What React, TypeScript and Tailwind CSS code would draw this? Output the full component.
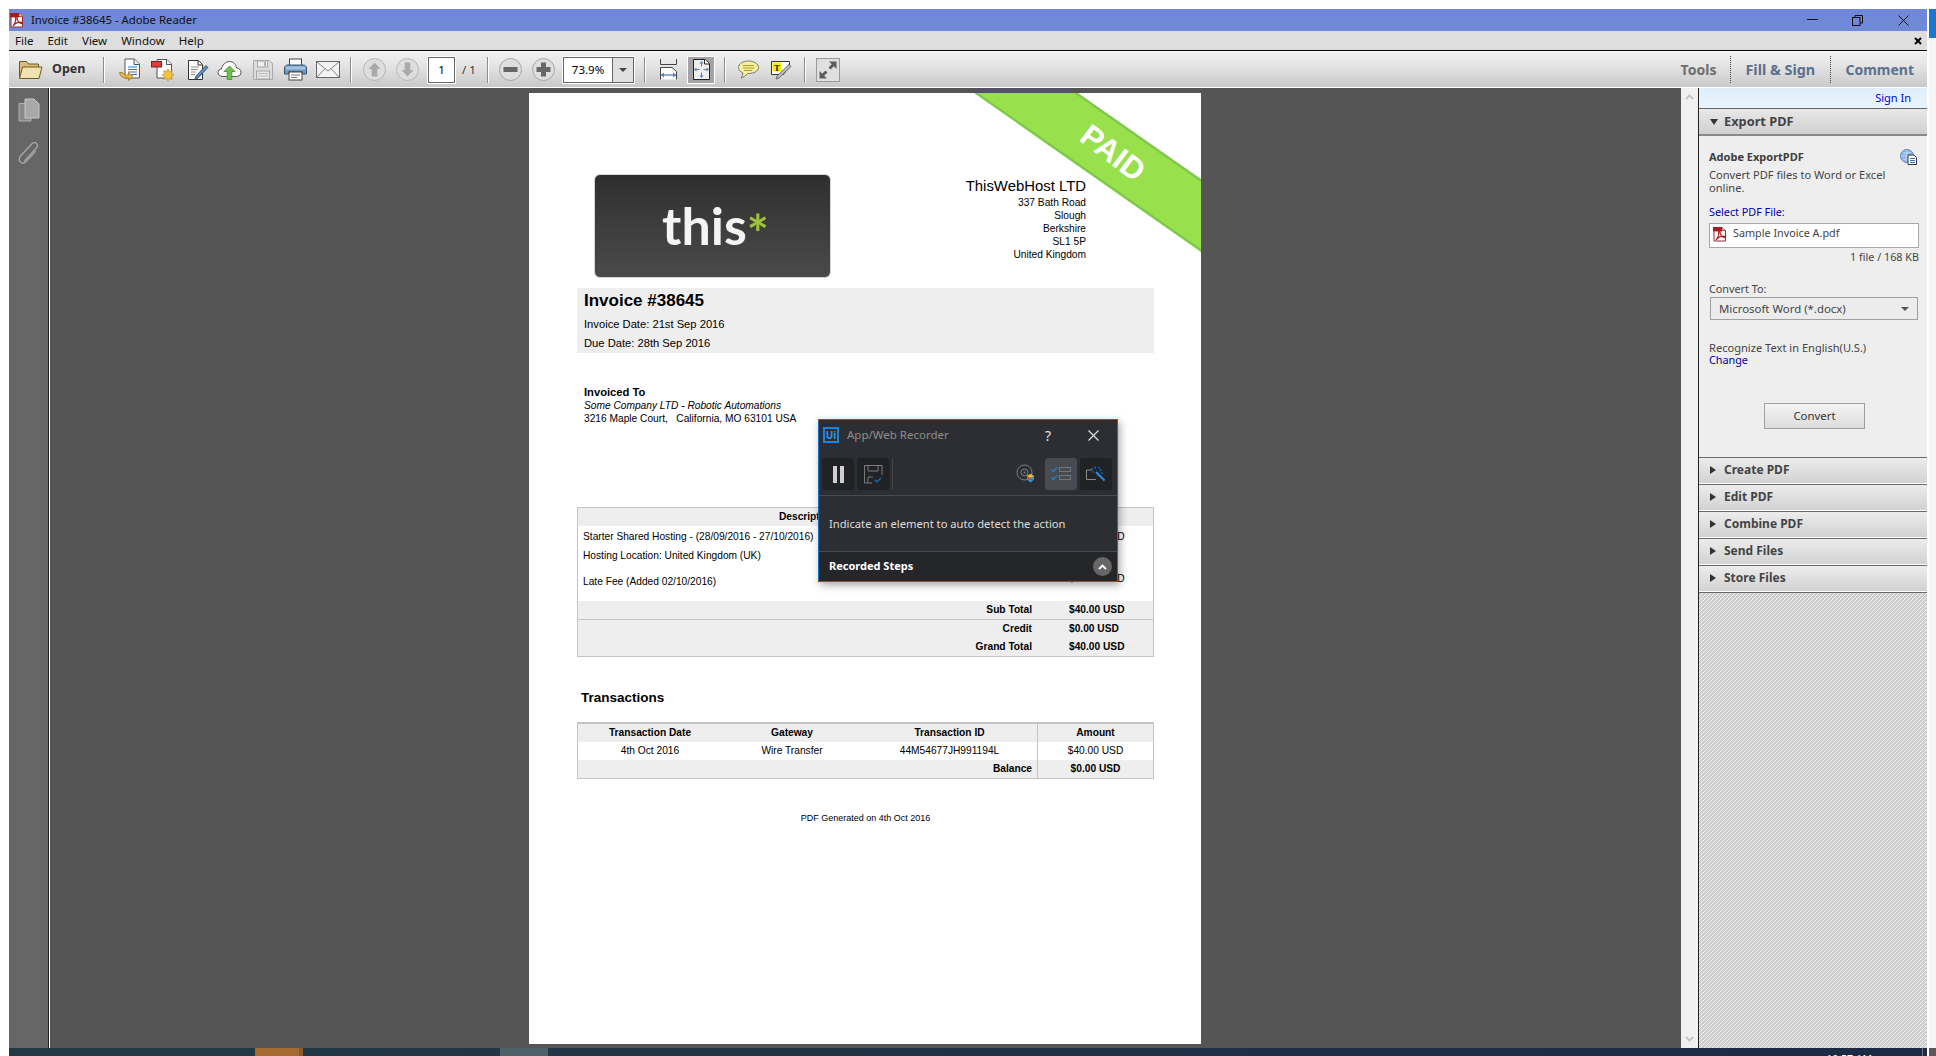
import React from "react";

const UI = "font-['Noto_Sans','Open_Sans',sans-serif]";

function PdfIcon({ size = 16 }: { size?: number }) {
  return (
    <svg width={size} height={size} viewBox="0 0 16 16" className="shrink-0">
      <path d="M1 1.500h8l3.500 3V15H1z" fill="#fff" stroke="#9a2a2a" strokeWidth="1" />
      <path d="M9 1.500v3h3.500" fill="#f3dede" stroke="#9a2a2a" strokeWidth="0.8" />
      <rect x="0" y="1" width="9" height="4.400" fill="#a81c1c" />
      <path d="M3 14c1.500-2 3-6 2.600-8.600C5.300 4 7 4 7 6c0 2.500 2 5 4 5.500 1.600.4 2-.9.300-1.200C9 10 5.500 11 3 14z" fill="none" stroke="#b11e1e" strokeWidth="1.200" />
    </svg>
  );
}

function Sep({ ml, mr }: { ml: string; mr: string }) {
  return <div className={`w-[2px] h-[26px] bg-[#8c8c8c] border-r border-white shrink-0 ${ml} ${mr}`} />;
}

function Folder() {
  return (
    <svg width="25" height="21" viewBox="0 0 25 21">
      <path d="M1.500 19V2.500h7l2 2.500h10v3" fill="#d9bf7c" stroke="#6d5a2c" />
      <path d="M1.500 19.500 4.500 8h19.500l-3 11.500z" fill="#f1e3b0" stroke="#6d5a2c" />
    </svg>
  );
}
function ConvertDoc() {
  return (
    <svg width="23" height="23" viewBox="0 0 23 23">
      <path d="M7 1h9.500L21.500 6v14H7z" fill="#fff" stroke="#555" />
      <path d="M16 1v5.500h5.500" fill="#eee" stroke="#555" />
      <path d="M10 9h9M10 11.500h9M10 14h9M13 16.500h6" stroke="#3a6fc4" strokeWidth="1.200" />
      <path d="M1.500 14.500c.5 4 4 6 9 5.500v2.500l4.500-4-4.500-4v2.500c-3 .5-5-.5-6-2.500z" fill="#e9b64a" stroke="#9b7420" strokeWidth="0.800" />
    </svg>
  );
}
function CreateDoc() {
  return (
    <svg width="24" height="24" viewBox="0 0 24 24">
      <path d="M6 1.500h10l4.500 4.500v14H6z" fill="#fff" stroke="#555" />
      <path d="M15.500 1.500V6.500h5" fill="#eee" stroke="#555" />
      <rect x="0.500" y="3.500" width="10" height="5.500" fill="#e23b3b" stroke="#7d2020" />
      <path d="M17 11l1.500 2.500 2.800-.8-.8 2.800L23 17l-2.500 1.500.8 2.800-2.800-.8L17 23l-1.500-2.500-2.800.8.8-2.800L11 17l2.500-1.500-.8-2.800 2.800.8z" fill="#f4c43c" stroke="#ab8420" strokeWidth="0.600" />
    </svg>
  );
}
function EditDoc() {
  return (
    <svg width="22" height="22" viewBox="0 0 22 22">
      <path d="M1.500 1.500h10l4 4v15h-14z" fill="#fff" stroke="#333" />
      <path d="M11 1.500v4.500h4.500" fill="#eee" stroke="#333" />
      <path d="M4 8h8M4 10.500h7M4 13h5M4 15.500h4" stroke="#888" />
      <path d="M9 17l-1 3 3-1L21 8.500 18.800 6.500z" fill="#5d8fb8" stroke="#27496a" strokeWidth="0.800" />
    </svg>
  );
}
function Cloud() {
  return (
    <svg width="25" height="20" viewBox="0 0 25 20">
      <path d="M6 16.500C2.500 16.500 1 14.500 1 12.500 1 10.500 2.500 9 4.500 9 5.200 5 8.500 1.500 12.500 1.500c4 0 6.500 2.800 7 6.500 2.500 0 4.500 2 4.500 4.300 0 2.500-2 4.200-4.500 4.200z" fill="#fbfbfb" stroke="#555" />
      <path d="M12.500 6l5.500 5.500h-3.200V19.500h-4.600V11.500H7z" fill="#6cc24a" stroke="#3d7d28" strokeWidth="0.700" />
    </svg>
  );
}
function SaveI() {
  return (
    <svg width="20" height="20" viewBox="0 0 20 20">
      <path d="M.5.500h16l3 3v16H.5z" fill="#dcdcdc" stroke="#a8a8a8" />
      <rect x="4.500" y="1" width="10" height="6" fill="#eee" stroke="#a8a8a8" />
      <rect x="11" y="2" width="2" height="4" fill="#b0b0b0" />
      <rect x="3.500" y="11" width="13" height="8" fill="#e8e8e8" stroke="#a8a8a8" />
      <path d="M5 13.500h10M5 16h10" stroke="#bbb" />
    </svg>
  );
}
function PrintI() {
  return (
    <svg width="23" height="23" viewBox="0 0 23 23">
      <rect x="5.500" y="1" width="12" height="8" fill="#fff" stroke="#444" />
      <path d="M3.500 7h16c1.500 0 3 1.500 3 3v6h-4v-2h-14v2h-4v-6c0-1.500 1.500-3 3-3z" fill="#6f9bc2" stroke="#33536f" />
      <rect x="1.500" y="8.500" width="20" height="3" fill="#a5c3dc" />
      <rect x="5" y="14" width="13" height="8" fill="#fff" stroke="#444" />
      <path d="M7 17h9M7 19.500h6" stroke="#777" />
    </svg>
  );
}
function MailI() {
  return (
    <svg width="24" height="17" viewBox="0 0 24 17">
      <rect x="0.500" y="0.500" width="23" height="16" fill="#f3f3f3" stroke="#666" />
      <path d="M1 1l11 9 11-9M1 16l8-8.500M23 16l-8-8.500" fill="none" stroke="#888" />
    </svg>
  );
}
function CircleArrow({ down }: { down?: boolean }) {
  return (
    <svg width="23" height="23" viewBox="0 0 23 23" className={down ? "rotate-180" : ""}>
      <circle cx="11.500" cy="11.500" r="11" fill="#dedede" stroke="#b5b5b5" />
      <path d="M11.500 4.500l6 6.500h-3.200v7.500h-5.600V11H5.500z" fill="#a9a9a9" />
    </svg>
  );
}
function CircleOp({ plus }: { plus?: boolean }) {
  return (
    <svg width="23" height="23" viewBox="0 0 23 23">
      <circle cx="11.500" cy="11.500" r="11" fill="#dedede" stroke="#a5a5a5" />
      <rect x="4.500" y="9" width="14" height="5" fill="#666" />
      {plus && <rect x="9" y="4.500" width="5" height="14" fill="#666" />}
    </svg>
  );
}
function FitWidth() {
  return (
    <svg width="17" height="21" viewBox="0 0 17 21">
      <path d="M.5 0v5.500h16V0" fill="none" stroke="#444" />
      <path d="M.5 20.500V8.500h11.500l4.500 4v8" fill="#fff" stroke="#444" />
      <path d="M1 16h15" stroke="#5b7fb8" strokeWidth="1.300" />
      <path d="M1 16l3-2.500v5zM16 16l-3-2.500v5z" fill="#5b7fb8" />
    </svg>
  );
}
function FitPage() {
  return (
    <svg width="17" height="21" viewBox="0 0 17 21">
      <path d="M.5.500h11.500l4.500 4v16H.5z" fill="#eee" stroke="#222" />
      <path d="M11.500.500v4.500h5" fill="#fff" stroke="#222" />
      <path d="M8.500 3v4.500M8.500 13.500V18M2 10.500h4.500M10.500 10.500H15" stroke="#5b7fb8" />
      <path d="M8.500 2l-2 2.500h4zM8.500 19l-2-2.500h4zM1 10.500l2.500-2v4zM16 10.500l-2.500-2v4z" fill="#5b7fb8" />
    </svg>
  );
}
function CommentI() {
  return (
    <svg width="21" height="19" viewBox="0 0 21 19">
      <path d="M10.500 1C5 1 .5 3.800.5 7.500c0 2.500 2 4.500 4.500 5.500-.2 2-1 3.500-2 5 2.500-.7 5-2.500 6.500-4.500h1c5.500 0 10-2.500 10-6S16 1 10.500 1z" fill="#f7f09a" stroke="#777" />
      <path d="M5 5.500h11M5 8h11M6 10.500h8" stroke="#a59a30" />
    </svg>
  );
}
function HighlightI() {
  return (
    <svg width="21" height="20" viewBox="0 0 21 20">
      <path d="M.5 1.500h18v4l-6 9H.5z" fill="#fff" stroke="#333" />
      <rect x="1.500" y="2.500" width="9" height="9" fill="#f4f000" />
      <text x="6" y="10.500" textAnchor="middle" fontSize="9" fontWeight="700" fontFamily="Liberation Serif" fill="#222">T</text>
      <path d="M6 16l-1 3 3-1L20 6.500 18 4.500z" fill="#bbb" stroke="#555" strokeWidth="0.800" />
    </svg>
  );
}
function ExpandI() {
  return (
    <svg width="24" height="24" viewBox="0 0 24 24">
      <rect x="0.500" y="0.500" width="23" height="23" fill="#e0e0e0" stroke="#9a9a9a" />
      <path d="M13 3.500h7.500V11l-2.700-2.700-3.300 3.200-2-2 3.300-3.200zM11 20.500H3.500V13l2.700 2.700 3.300-3.200 2 2-3.300 3.200z" fill="#5c5c5c" />
    </svg>
  );
}

function Toolbar() {
  return (
    <div className={`h-[35px] flex items-center bg-[linear-gradient(180deg,#f0f0f0_0%,#e6e6e6_35%,#c9c9c9_100%)] ${UI} shrink-0`}>
      <div className="ml-[9px] flex"><Folder /></div>
      <span className="ml-[9px] w-[33px] text-[12.500px] font-bold text-[#333]">Open</span>
      <Sep ml="ml-[18px]" mr="mr-[13px]" />
      <ConvertDoc />
      <div className="ml-[10px] flex"><CreateDoc /></div>
      <div className="ml-[12px] flex"><EditDoc /></div>
      <div className="ml-[8px] flex"><Cloud /></div>
      <div className="ml-[11px] flex"><SaveI /></div>
      <div className="ml-[11px] flex"><PrintI /></div>
      <div className="ml-[9px] flex"><MailI /></div>
      <Sep ml="ml-[10px]" mr="mr-[11px]" />
      <CircleArrow />
      <div className="ml-[10px] flex"><CircleArrow down /></div>
      <div className="ml-[9px] w-[27px] h-[26px] bg-white border border-[#666] outline outline-white flex items-center justify-center text-[11.500px] text-black">1</div>
      <span className="ml-[7px] w-[16px] text-[11.500px] text-[#333] whitespace-nowrap">/ 1</span>
      <Sep ml="ml-[9px]" mr="mr-[10px]" />
      <CircleOp />
      <div className="ml-[10px] flex"><CircleOp plus /></div>
      <div className="ml-[8px] w-[71px] h-[26px] border border-[#666] outline outline-white flex text-[11.500px] text-black">
        <div className="w-[48px] bg-white flex items-center justify-center">73.9%</div>
        <div className="flex-1 border-l border-[#666] bg-[#e0e0e0] flex items-center justify-center">
          <div className="w-0 h-0 border-x-[4px] border-x-transparent border-t-[4px] border-t-[#444]" />
        </div>
      </div>
      <Sep ml="ml-[10px]" mr="mr-[14px]" />
      <FitWidth />
      <div className="ml-[11px] w-[26px] h-[26px] bg-[#a3a3a3] outline outline-white flex items-center justify-center"><FitPage /></div>
      <Sep ml="ml-[10px]" mr="mr-[12px]" />
      <CommentI />
      <div className="ml-[12px] flex"><HighlightI /></div>
      <Sep ml="ml-[12px]" mr="mr-[10px]" />
      <ExpandI />
      <div className="ml-auto flex items-center text-[14px] font-bold h-full">
        <span className="text-[#6e6e6e] whitespace-nowrap">Tools</span>
        <div className="mx-[14px] h-[27px] border-l border-dotted border-[#444]" />
        <span className="w-[71px] text-[14.400px] text-[#5c6f8d] whitespace-nowrap">Fill &amp; Sign</span>
        <div className="mx-[14px] h-[27px] border-l border-dotted border-[#444]" />
        <span className="mr-[13px] text-[#5c6f8d] whitespace-nowrap">Comment</span>
      </div>
    </div>
  );
}

function SumRow({ label, value, h }: { label: string; value: string; h: string }) {
  return (
    <div className={`flex items-center font-bold ${h}`}>
      <div className="w-[454px] text-right">{label}</div>
      <div className="ml-[37px]">{value}</div>
    </div>
  );
}

function Page() {
  return (
    <div className="relative w-[672px] h-[951px] bg-white shrink-0 overflow-hidden font-['Liberation_Sans',Arial,sans-serif] text-black pl-[48px] pr-[47px]">
      <div className="absolute left-[445px] top-0 w-[227px] h-[159px] bg-[#7ec84c] [clip-path:polygon(0_0,104px_0,227px_86px,227px_159px)]" />
      <div className="absolute left-[445px] top-0 w-[227px] h-[159px] bg-[#98e04c] [clip-path:polygon(4px_0,100px_0,227px_89px,227px_156px)]" />
      <div className="absolute left-[584px] top-[60px] -translate-x-1/2 -translate-y-1/2 rotate-[37deg] text-white text-[31px] font-bold leading-none">PAID</div>

      <div className="relative flex justify-between pt-[81px] h-[195px]">
        <div className="ml-[17px] w-[237px] h-[104px] rounded-[6px] border border-[#d4d4d4] bg-[linear-gradient(180deg,#2e2e2e_0%,#3c3c3c_45%,#4a4a4a_100%)] flex items-center justify-center">
          <span className="font-['Lato',sans-serif] font-bold text-[52px] leading-none text-[#f4f4f4] -mt-[2px] ml-[6px]">this<span className="inline-block translate-y-[8px] text-[#9fc43a]">*</span></span>
        </div>
        <div className="mr-[68px] mt-[3px] text-right text-[10.200px] leading-[13px]">
          <div className="text-[14.900px] leading-[18px] mb-[1px]">ThisWebHost LTD</div>
          <div>337 Bath Road</div>
          <div>Slough</div>
          <div>Berkshire</div>
          <div>SL1 5P</div>
          <div>United Kingdom</div>
        </div>
      </div>

      <div className="h-[65px] bg-[#eeeeee] pl-[7px] pt-[2px] text-[11.200px]">
        <div className="text-[17px] font-bold leading-[22px] mb-[3px]">Invoice #38645</div>
        <div className="leading-[19px]">Invoice Date: 21st Sep 2016</div>
        <div className="leading-[19px]">Due Date: 28th Sep 2016</div>
      </div>

      <div className="pl-[7px] pt-[32px] h-[154px] text-[11.200px]">
        <div className="font-bold leading-[14px]">Invoiced To</div>
        <div className="italic text-[10.200px] leading-[14px]">Some Company LTD - Robotic Automations</div>
        <div className="text-[10.200px] leading-[12px]">3216 Maple Court, &nbsp; California, MO 63101 USA</div>
      </div>

      <div className="border border-[#c4c4c4] h-[150px] text-[10.200px]">
        <div className="h-[18px] bg-[#eeeeee] flex items-center font-bold">
          <div className="w-[458px] text-center">Description</div>
          <div className="flex-1 text-center">Amount</div>
        </div>
        <div className="h-[75px] pl-[5px]">
          <div className="h-[21px] flex items-center">
            <div className="w-[486px]">Starter Shared Hosting - (28/09/2016 - 27/10/2016)</div>
            <div>$30.00 USD</div>
          </div>
          <div className="h-[17px] flex items-center">Hosting Location: United Kingdom (UK)</div>
          <div className="h-[18px] mt-[9px] flex items-center">
            <div className="w-[486px]">Late Fee (Added 02/10/2016)</div>
            <div className="-mt-[6px]">$10.00 USD</div>
          </div>
        </div>
        <div className="bg-[#eeeeee]">
          <SumRow label="Sub Total" value="$40.00 USD" h="h-[19px] border-b border-[#c4c4c4]" />
          <SumRow label="Credit" value="$0.00 USD" h="h-[18px]" />
          <SumRow label="Grand Total" value="$40.00 USD" h="h-[18px]" />
        </div>
      </div>

      <div className="pl-[4px] pt-[32px] h-[65px] text-[13.500px] font-bold leading-[18px]">Transactions</div>

      <div className="border border-t-2 border-[#c4c4c4] h-[57px] text-[10.200px]">
        <div className="flex h-[18px] bg-[#eeeeee] font-bold items-stretch">
          <div className="w-[144px] flex items-center justify-center">Transaction Date</div>
          <div className="w-[140px] flex items-center justify-center">Gateway</div>
          <div className="w-[175px] flex items-center justify-center">Transaction ID</div>
          <div className="flex-1 border-l border-[#c4c4c4] flex items-center justify-center">Amount</div>
        </div>
        <div className="flex h-[18px] items-stretch">
          <div className="w-[144px] flex items-center justify-center">4th Oct 2016</div>
          <div className="w-[140px] flex items-center justify-center">Wire Transfer</div>
          <div className="w-[175px] flex items-center justify-center">44M54677JH991194L</div>
          <div className="flex-1 border-l border-[#c4c4c4] flex items-center justify-center">$40.00 USD</div>
        </div>
        <div className="flex h-[18px] bg-[#eeeeee] font-bold items-stretch">
          <div className="w-[454px] flex items-center justify-end">Balance</div>
          <div className="w-[5px]" />
          <div className="flex-1 border-l border-[#c4c4c4] flex items-center justify-center">$0.00 USD</div>
        </div>
      </div>

      <div className="mt-[31px] text-center text-[9px] leading-[16px]">PDF Generated on 4th Oct 2016</div>
    </div>
  );
}

function Recorder() {
  return (
    <div className={`absolute left-[768px] top-[331px] w-[300px] h-[163px] bg-[#2d2e33] border border-[#1b6fc2] shadow-[2px_3px_8px_rgba(0,0,0,0.35)] flex flex-col ${UI}`}>
      <div className="h-[32px] flex items-center shrink-0 pb-[2px]">
        <div className="ml-[4px] w-[16px] h-[16px] border-2 border-[#1a84d8] text-[#2a9be8] text-[10px] leading-[12px] text-center font-bold">Ui</div>
        <span className="ml-[8px] text-[11.500px] text-[#8e8e8e]">App/Web Recorder</span>
        <span className="ml-auto text-[14px] text-[#e8e8e8]">?</span>
        <svg width="11" height="11" viewBox="0 0 11 11" className="ml-[37px] mr-[18px]"><path d="M.5.500l10 10M10.500.500l-10 10" stroke="#e8e8e8" strokeWidth="1.100" /></svg>
      </div>
      <div className="h-[44px] flex items-start pt-[6px] pl-[3px] border-b border-[#4a4b50] shrink-0">
        <div className="w-[32px] h-[32px] rounded-[3px] bg-[#212226] flex items-center justify-center gap-[3px]">
          <div className="w-[4px] h-[17px] bg-[#d0d0d0]" /><div className="w-[4px] h-[17px] bg-[#d0d0d0]" />
        </div>
        <div className="ml-[3px] w-[32px] h-[32px] rounded-[3px] bg-[#212226] flex items-center justify-center">
          <svg width="19" height="19" viewBox="0 0 19 19"><path d="M18 10V.5H.5V18H8" fill="none" stroke="#7a7a7a" /><path d="M4 1v5h10V1M4 18v-6h5" fill="none" stroke="#7a7a7a" /><path d="M11 15l2 2 4-4" fill="none" stroke="#1a6fc2" strokeWidth="1.200" /></svg>
        </div>
        <div className="ml-[3px] w-px h-[32px] bg-[#46474c]" />
        <svg width="20" height="20" viewBox="0 0 20 20" className="ml-auto mr-[9px] mt-[6px]">
          <circle cx="8.500" cy="8.500" r="7.500" fill="none" stroke="#808080" />
          <circle cx="8.500" cy="8.500" r="3.500" fill="none" stroke="#808080" />
          <circle cx="8.500" cy="8.500" r="1" fill="#808080" />
          <path d="M14.500 10l3.500 2v3.500h-3.500z" fill="#2f9ae0" /><path d="M11 12l3.500-2v5.500H11z" fill="#e8502c" /><path d="M11 15.500h7l-3.500 3z" fill="#2f9ae0" /><path d="M11 12l3.500-2 3.500 2-3.500 1.500z" fill="#f2c230" />
        </svg>
        <div className="w-[32px] h-[32px] rounded-[3px] bg-[#4a4b52] flex items-center justify-center">
          <svg width="20" height="16" viewBox="0 0 20 16"><path d="M.5 3.500L2.500 5.500 6 1.500M.5 11.500l2 2L6 9.500" fill="none" stroke="#1a7fd8" strokeWidth="1.300" /><rect x="8.500" y="1.500" width="11" height="4" fill="none" stroke="#75767c" /><rect x="8.500" y="9.500" width="11" height="4" fill="none" stroke="#75767c" /></svg>
        </div>
        <div className="ml-[3px] mr-[5px] w-[32px] h-[32px] rounded-[3px] bg-[#212226] flex items-center justify-center">
          <svg width="20" height="16" viewBox="0 0 20 16"><path d="M6 4H.5v9.500h9.500" fill="none" stroke="#8a8a8a" /><path d="M10 6l8.500 8.500" stroke="#2c8fe0" strokeWidth="1.800" /><path d="M9 .5v2.500M13 .5V3M15.500 3.500l-1.500 1.500M17 7h-2.500M5.500 2l1.500 1.500M8 6H6M12 8.500v2" stroke="#1a6fc2" strokeWidth="1.200" /></svg>
        </div>
      </div>
      <div className="flex-1 flex items-center pl-[10px] text-[11.200px] text-[#dfdfdf] border-b border-[#4a4b50] pt-[1px]">Indicate an element to auto detect the action</div>
      <div className="h-[29px] shrink-0 bg-[#25262a] flex items-center pl-[10px] text-[11px] font-bold text-white">
        Recorded Steps
        <div className="ml-auto mr-[5px] w-[19px] h-[19px] rounded-full bg-[#666666] flex items-center justify-center">
          <svg width="9" height="6" viewBox="0 0 9 6"><path d="M1 5l3.500-3.500L8 5" fill="none" stroke="#fff" strokeWidth="1.800" /></svg>
        </div>
      </div>
    </div>
  );
}

function Section({ title }: { title: string }) {
  return (
    <div className="h-[27px] shrink-0 border-t border-[#6a6a6a] border-b border-b-white bg-[linear-gradient(180deg,#ececec,#d2d2d2)] flex items-center pb-[2px]">
      <div className="ml-[11px] w-0 h-0 border-y-[4px] border-y-transparent border-l-[6px] border-l-[#333]" />
      <span className="ml-[8px] text-[12px] font-bold text-[#444]">{title}</span>
    </div>
  );
}

function RightPanel() {
  return (
    <div className={`w-[228px] shrink-0 flex flex-col bg-[#eeeeee] ${UI}`}>
      <div className="h-[20px] shrink-0 bg-[linear-gradient(180deg,#deeffb,#eaf4fc)] text-right pr-[16px] text-[11px] leading-[20px] text-[#0000dd]">Sign In</div>
      <div className="h-[28px] shrink-0 border-t border-[#666] border-b-2 border-b-[#8a8a8a] bg-[linear-gradient(180deg,#e8e8e8,#d0d0d0)] flex items-center">
        <div className="ml-[11px] w-0 h-0 border-x-[4px] border-x-transparent border-t-[6px] border-t-[#333]" />
        <span className="ml-[6px] text-[12.800px] font-bold text-[#444]">Export PDF</span>
      </div>
      <div className="h-[321px] shrink-0 pl-[10px] pr-[8px] text-[10.800px] text-[#444]">
        <div className="flex items-center justify-between h-[18px] mt-[12px]">
          <span className="font-bold text-[#3d3d3d] text-[11px]">Adobe ExportPDF</span>
          <svg width="17" height="16" viewBox="0 0 17 16" className="mr-[2px]">
            <circle cx="7" cy="7" r="6.500" fill="#8db6e8" stroke="#5d86c0" />
            <path d="M1 7h12M7 1v12M3 3c2.500 1.500 5.500 1.500 8 0M3 11c2.500-1.500 5.500-1.500 8 0" fill="none" stroke="#d8e7f8" strokeWidth="0.700" />
            <path d="M8 6h6l2.500 2.500V15.500H8z" fill="#fff" stroke="#333" />
            <path d="M10 9.500h5M10 11.500h5M10 13.500h5" stroke="#3a6fc4" />
          </svg>
        </div>
        <div className="leading-[13px] mt-[2px] text-[11.100px] whitespace-nowrap">Convert PDF files to Word or Excel<br />online.</div>
        <div className="mt-[11px] leading-[14px] text-[#0000aa]">Select PDF File:</div>
        <div className="mt-[4px] h-[25px] w-[210px] bg-white border border-[#a8a8a8] flex items-start pl-[3px] pt-[2px]">
          <PdfIcon size={16} />
          <span className="ml-[4px] leading-[14px]">Sample Invoice A.pdf</span>
        </div>
        <div className="w-[210px] text-right leading-[14px] mt-[2px]">1 file / 168 KB</div>
        <div className="leading-[14px] mt-[18px]">Convert To:</div>
        <div className="mt-[1px] ml-[1px] h-[23px] w-[208px] border border-[#a0a0a0] bg-[#ececec] flex items-center pl-[8px] pr-[8px]">
          <span className="text-[11.400px]">Microsoft Word (*.docx)</span>
          <div className="ml-auto w-0 h-0 border-x-[4px] border-x-transparent border-t-[4px] border-t-[#555]" />
        </div>
        <div className="mt-[22px] leading-[12px] text-[11.100px] whitespace-nowrap">Recognize Text in English(U.S.)</div>
        <div className="leading-[12px] text-[#0000aa]">Change</div>
        <div className="mt-[37px] ml-[55px] w-[101px] h-[26px] border border-[#a0a0a0] bg-[linear-gradient(180deg,#f4f4f4,#dcdcdc)] flex items-center justify-center text-[11.400px] text-[#333]">Convert</div>
      </div>
      <Section title="Create PDF" />
      <Section title="Edit PDF" />
      <Section title="Combine PDF" />
      <Section title="Send Files" />
      <Section title="Store Files" />
      <div className="flex-1 border-t border-[#6a6a6a] bg-[linear-gradient(135deg,#cdcdcd_37.5%,#f2f2f2_37.5%,#f2f2f2_50%,#cdcdcd_50%,#cdcdcd_87.5%,#f2f2f2_87.5%)] bg-[length:4px_4px]" />
    </div>
  );
}

export default function App() {
  return (
    <div className="w-[1936px] h-[1056px] overflow-hidden bg-white flex pt-[9px]">
      <div className="w-[9px] shrink-0" />
      <div className="w-[1918px] shrink-0 flex flex-col">
        <div className={`h-[22px] shrink-0 bg-[#7088d8] flex items-center ${UI}`}>
          <div className="ml-[1px] flex"><PdfIcon size={16} /></div>
          <span className="ml-[5px] text-[11.350px] text-[#111]">Invoice #38645 - Adobe Reader</span>
          <svg width="11" height="2" viewBox="0 0 11 2" className="ml-auto"><rect width="11" height="1" fill="#111" /></svg>
          <svg width="11" height="11" viewBox="0 0 11 11" className="ml-[34px]"><path d="M3 3V.5h7.500V8H8" fill="none" stroke="#111" /><rect x="0.500" y="2.500" width="7.500" height="8" fill="none" stroke="#111" /></svg>
          <svg width="11" height="11" viewBox="0 0 11 11" className="ml-[35px] mr-[18px]"><path d="M.5.500l10 10M10.500.500l-10 10" stroke="#111" /></svg>
        </div>
        <div className={`h-[19px] shrink-0 bg-[#dedede] flex items-center text-[11.500px] text-[#111] pl-[6px] ${UI}`}>
          <span>File</span>
          <span className="ml-[14px]">Edit</span>
          <span className="ml-[14px]">View</span>
          <span className="ml-[14px]">Window</span>
          <span className="ml-[14px]">Help</span>
          <svg width="8" height="8" viewBox="0 0 8 8" className="ml-auto mr-[5px]"><path d="M1 1l6 6M7 1L1 7" stroke="#000" strokeWidth="2" /></svg>
        </div>
        <div className="h-[2px] shrink-0 bg-white border-t border-black" />
        <Toolbar />
        <div className="h-px shrink-0 bg-white" />
        <div className="flex-1 min-h-0 flex">
          <div className="w-[40px] shrink-0 bg-[#666666] border-r border-[#222] flex flex-col items-center pt-[10px]">
            <svg width="22" height="24" viewBox="0 0 22 24">
              <path d="M1 5.500h12V23H1z" fill="#8a8a8a" stroke="#b0b0b0" />
              <path d="M7 1h9l5 5v14H7z" fill="#a8a8a8" stroke="#c8c8c8" />
            </svg>
            <svg width="22" height="24" viewBox="0 0 22 24" className="mt-[19px]" fill="none">
              <path d="M6 20.500 18.500 7c2-2.200 .5-5-1.500-5.300-1.300-.2-2.500.3-3.500 1.500L3 14.500c-2.500 3-1.800 5.500-.3 6.800 1.500 1.300 4 1 6-1.200l9-10" stroke="#a8a8a8" strokeWidth="1.300" />
            </svg>
          </div>
          <div className="relative ml-px flex-1 min-w-0 bg-[#555555] flex justify-center pt-[5px] pr-px">
            <Page />
            <Recorder />
          </div>
          <div className="w-[17px] shrink-0 bg-[#f0f0f0] flex flex-col items-center justify-between py-[6px]">
            <svg width="9" height="6" viewBox="0 0 9 6"><path d="M1 5l3.500-3.500L8 5" fill="none" stroke="#c2c2c2" strokeWidth="1.800" /></svg>
            <svg width="9" height="6" viewBox="0 0 9 6"><path d="M1 1l3.500 3.500L8 1" fill="none" stroke="#c2c2c2" strokeWidth="1.800" /></svg>
          </div>
          <div className="w-px shrink-0 bg-[#222]" />
          <RightPanel />
        </div>
        <div className="h-[8px] shrink-0 flex bg-[linear-gradient(90deg,#223a45,#1c2a45)] overflow-hidden">
          <div className="ml-[246px] w-[48px] bg-[#a56a30] border-r-[4px] border-r-[#8f5a28]" />
          <div className="ml-[197px] w-[48px] bg-[#4d616b]" />
          <div className="ml-auto mr-[50px] mt-[5px] text-[10.500px] leading-[12px] text-white font-['Noto_Sans',sans-serif] whitespace-nowrap">10:57 AM</div>
          <div className="w-px bg-[#777] mr-[4px]" />
        </div>
      </div>
      <div className="w-[2px] shrink-0" />
      <div className="w-[7px] shrink-0 flex flex-col">
        <div className="h-[29px] bg-[#1a78d0]" />
        <div className="flex-1 bg-[#f6f6f6]" />
        <div className="h-[8px] bg-[#5a5a5a]" />
      </div>
    </div>
  );
}
